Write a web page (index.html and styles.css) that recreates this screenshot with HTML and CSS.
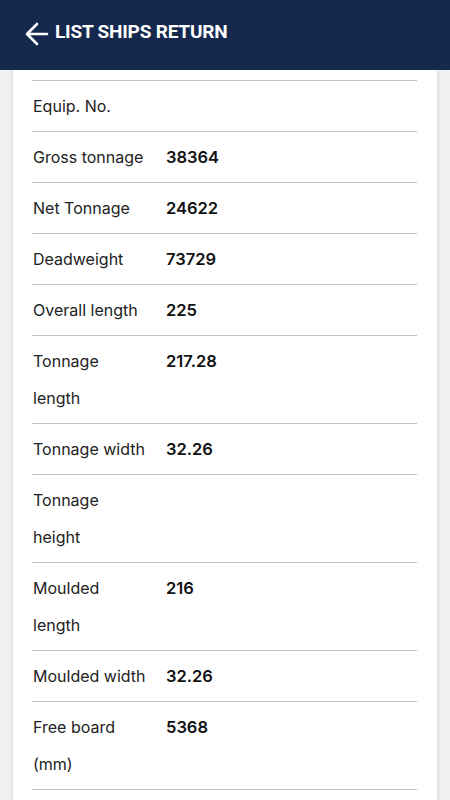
FILE: index.html
```html
<!DOCTYPE html>
<html lang="en">
<head>
  <meta charset="UTF-8">
  <meta name="viewport" content="width=device-width, initial-scale=1.0">
  <title>List Ships Return</title>
  <link rel="stylesheet" href="styles.css">
</head>
<body>
  <header class="topbar">
    <svg class="back" width="24" height="24" viewBox="0 0 24 24">
      <path d="M22 12H3M12 2L2 12l10 10" fill="none" stroke="#fff" stroke-width="2.6" stroke-linecap="round" stroke-linejoin="round"/>
    </svg>
    <h1>LIST SHIPS RETURN</h1>
  </header>

  <main class="card">
    <div class="list">
      <div class="row"><span class="label">Equip. No.</span><span class="value"></span></div>
      <div class="row"><span class="label">Gross tonnage</span><span class="value">38364</span></div>
      <div class="row"><span class="label">Net Tonnage</span><span class="value">24622</span></div>
      <div class="row"><span class="label">Deadweight</span><span class="value">73729</span></div>
      <div class="row"><span class="label">Overall length</span><span class="value">225</span></div>
      <div class="row"><span class="label">Tonnage length</span><span class="value">217.28</span></div>
      <div class="row"><span class="label">Tonnage width</span><span class="value">32.26</span></div>
      <div class="row"><span class="label">Tonnage height</span><span class="value"></span></div>
      <div class="row"><span class="label">Moulded length</span><span class="value">216</span></div>
      <div class="row"><span class="label">Moulded width</span><span class="value">32.26</span></div>
      <div class="row"><span class="label">Free board (mm)</span><span class="value">5368</span></div>
    </div>
  </main>
</body>
</html>
```

FILE: styles.css
```css
html, body {
  margin: 0;
  height: 100%;
  overflow: hidden;
}
body {
  background: #f1f1f1;
  font-family: Inter, "Open Sans", sans-serif;
}
.topbar {
  height: 70px;
  box-sizing: border-box;
  background: #14294d;
  display: flex;
  align-items: flex-start;
  padding: 21px 0 0 25px;
  gap: 6px;
  position: relative;
  z-index: 2;
}
.back {
  display: block;
  margin-top: 1px;
}
.topbar h1 {
  margin: 0;
  color: #fff;
  font-family: Roboto, "Liberation Sans", sans-serif;
  font-weight: 700;
  font-size: 19px;
  line-height: 22px;
  letter-spacing: -0.2px;
}
.card {
  margin: 0 13px;
  background: #fff;
  padding: 10px 20px 0 19px;
  box-shadow: 0 0 4px rgba(0,0,0,0.18);
  height: 760px;
}
.list {
  border-top: 1px solid #c4c4c4;
}
.row {
  display: grid;
  grid-template-columns: 133px 1fr;
  padding: 7px 0 6px 1px;
  border-bottom: 1px solid #c4c4c4;
  line-height: 37px;
}
.label {
  font-size: 16px;
  color: #222;
  padding-right: 17px;
}
.value {
  font-size: 16.5px;
  font-weight: 600;
  color: #111;
}
```
